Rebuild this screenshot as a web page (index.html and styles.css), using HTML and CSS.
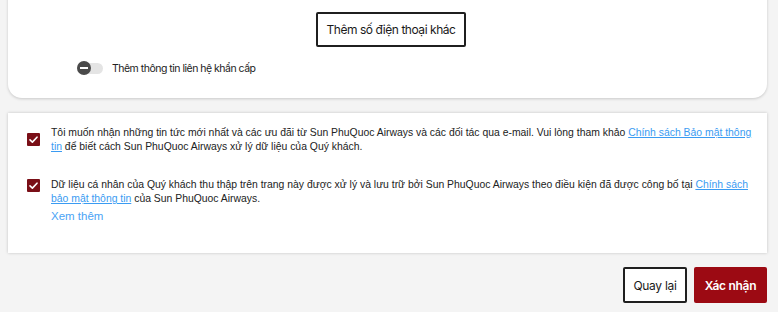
FILE: index.html
```html
<!DOCTYPE html>
<html lang="vi">
<head>
  <meta charset="UTF-8">
  <title>Thông tin liên hệ</title>
  <link rel="stylesheet" href="styles.css">
</head>
<body>

  <div class="page">
    <div class="contact-card">
      <div class="add-phone-row">
        <button type="button" class="outline-btn add-phone-btn">Thêm số điện thoại khác</button>
      </div>
      <label class="toggle-row">
        <span class="toggle">
          <span class="toggle-knob"></span>
        </span>
        <span class="toggle-label">Thêm thông tin liên hệ khẩn cấp</span>
      </label>
    </div>

    <div class="consent-card">
      <div class="consent-row first">
        <span class="checkbox"><svg width="13" height="13" viewBox="0 0 13 13"><path d="M3 6.8 L5.4 9.1 L10 4.2" fill="none" stroke="#fff" stroke-width="1.6" stroke-linecap="round" stroke-linejoin="round"/></svg></span>
        <p class="consent-text">Tôi muốn nhận những tin tức mới nhất và các ưu đãi từ Sun PhuQuoc Airways và các đối tác qua e-mail. Vui lòng tham khảo <a href="#">Chính sách Bảo mật thông tin</a> để biết cách Sun PhuQuoc Airways xử lý dữ liệu của Quý khách.</p>
      </div>
      <div class="consent-row second">
        <span class="checkbox"><svg width="13" height="13" viewBox="0 0 13 13"><path d="M3 6.8 L5.4 9.1 L10 4.2" fill="none" stroke="#fff" stroke-width="1.6" stroke-linecap="round" stroke-linejoin="round"/></svg></span>
        <div>
          <p class="consent-text">Dữ liệu cá nhân của Quý khách thu thập trên trang này được xử lý và lưu trữ bởi Sun PhuQuoc Airways theo điều kiện đã được công bố tại <a href="#">Chính sách bảo mật thông tin</a> của Sun PhuQuoc Airways.</p>
          <a href="#" class="see-more">Xem thêm</a>
        </div>
      </div>
    </div>

    <div class="button-row">
      <button type="button" class="outline-btn back-btn">Quay lại</button>
      <button type="submit" class="confirm-btn">Xác nhận</button>
    </div>
  </div>

</body>
</html>
```

FILE: styles.css
```css
body {
  margin: 0;
  padding: 0;
  background-color: #f4f4f4;
  font-family: Inter, "Noto Sans", sans-serif;
  color: #1a1a1a;
}

.page {
  padding: 0 11px 0 8px;
}

.contact-card {
  background-color: #fff;
  margin-top: -20px;
  padding: 32px 0 23px;
  border-radius: 14px;
  box-shadow: 0 1px 3px rgba(0,0,0,0.18);
}

.add-phone-row {
  display: flex;
  justify-content: center;
}

.outline-btn {
  background-color: #fff;
  border: 2px solid #1f1f1f;
  border-radius: 2px;
  font-family: Inter, "Noto Sans", sans-serif;
  color: #1a1a1a;
  white-space: nowrap;
  cursor: pointer;
}

.add-phone-btn {
  width: 150px;
  height: 35px;
  padding: 0;
  font-size: 12px;
  letter-spacing: -0.45px;
  margin-left: 7px;
}

.toggle-row {
  display: flex;
  align-items: center;
  gap: 9px;
  margin: 15px 0 0 69px;
}

.toggle {
  position: relative;
  width: 26px;
  height: 11px;
  background-color: #e4e4e4;
  border-radius: 6px;
}

.toggle-knob {
  position: absolute;
  left: 0;
  top: -2px;
  width: 14px;
  height: 14px;
  border-radius: 50%;
  background-color: #4a4a4a;
}

.toggle-knob::after {
  content: "";
  position: absolute;
  left: 3px;
  top: 6px;
  width: 8px;
  height: 2px;
  background-color: #fff;
}

.toggle-label {
  font-size: 10.5px;
  letter-spacing: -0.5px;
  color: #222;
}

.consent-card {
  background-color: #fff;
  margin-top: 15px;
  padding: 13px 0 29px;
  box-shadow: 0 0 3px rgba(0,0,0,0.2);
}

.consent-row {
  display: flex;
  gap: 11px;
  padding: 0 14px 0 19px;
  font-family: "Liberation Sans", Arial, sans-serif;
}

.consent-row.first .checkbox {
  margin-top: 7px;
}

.consent-row.second {
  margin-top: 24px;
}

.consent-row.second .checkbox {
  margin-top: 1px;
}

.checkbox {
  flex: none;
  width: 13px;
  height: 13px;
  background-color: #7a0f17;
  border-radius: 1px;
}

.checkbox svg {
  display: block;
}

.consent-text {
  margin: 0;
  font-size: 10.4px;
  line-height: 14px;
  color: #222;
}

.consent-text a {
  color: #3a9bf2;
}

.see-more {
  display: inline-block;
  margin-top: 4px;
  font-size: 11.5px;
  color: #4aa3f5;
  text-decoration: none;
}

.button-row {
  display: flex;
  justify-content: flex-end;
  gap: 7px;
  margin-top: 14px;
}

.back-btn {
  width: 64px;
  height: 36px;
  padding: 0;
  font-size: 12px;
  letter-spacing: -0.3px;
}

.confirm-btn {
  width: 73px;
  height: 36px;
  padding: 0;
  border: none;
  border-radius: 2px;
  background-color: #9c0a13;
  color: #fff;
  font-family: Inter, "Noto Sans", sans-serif;
  font-size: 12px;
  font-weight: 600;
  letter-spacing: -0.3px;
  cursor: pointer;
}
```
